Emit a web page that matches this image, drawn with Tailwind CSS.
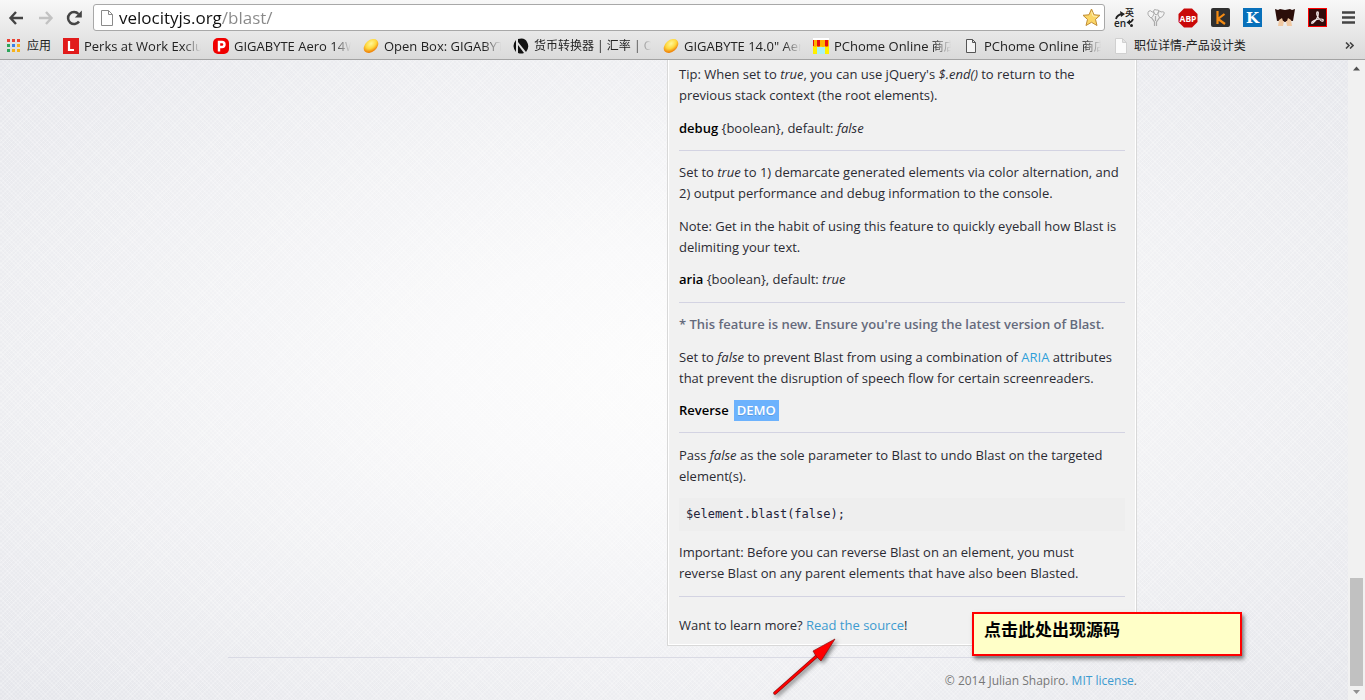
<!DOCTYPE html>
<html lang="en">
<head>
<meta charset="utf-8">
<title>Blast.js</title>
<script src="https://cdn.jsdelivr.net/npm/@tailwindcss/browser@4"></script>
</head>
<body class="relative h-screen flex flex-col overflow-hidden bg-[#f0f0f3] font-['Open_Sans','Noto_Sans_CJK_SC',sans-serif]">

<header class="shrink-0 h-[60px] flex flex-col bg-linear-to-b from-[#f8f8f8] to-[#dadada] border-b border-[#a3a3a3]">
  <div class="h-[35px] flex items-center pl-2 pr-[10px]">
    <button aria-label="Back" class="w-[18px] shrink-0"><svg width="16" height="16" viewBox="0 0 16 16" fill="none" stroke="#444" stroke-width="2.4"><path d="M8 2 2.5 8 8 14M2.5 8H15"/></svg></button>
    <button aria-label="Forward" class="w-[18px] ml-3 shrink-0"><svg width="16" height="16" viewBox="0 0 16 16" fill="none" stroke="#c2c2c2" stroke-width="2.4"><path d="M8 2 13.500 8 8 14M13.500 8H1"/></svg></button>
    <button aria-label="Reload" class="w-[18px] ml-[10px] shrink-0"><svg width="17" height="16" viewBox="0 0 17 16"><path d="M13 11.500A6 6 0 1 1 12.500 4" fill="none" stroke="#444" stroke-width="2.500"/><path d="M15.800.5V7.500H8.800z" fill="#444"/></svg></button>
    <div class="flex-1 ml-[9px] h-[27px] flex items-center bg-white border border-[#a8a8a8] rounded-[3px] pl-[7px] pr-[3px]">
      <svg class="shrink-0" width="12" height="16" viewBox="0 0 12 16" fill="#fff" stroke="#8a8a8a"><path d="M.5.5H7.500L11.500 4.500V15.500H.5zM7.500.5V4.500H11.500"/></svg>
      <input type="text" aria-label="Address" value="velocityjs.org/blast/" class="flex-1 min-w-0 ml-[6px] h-6 text-[17px] leading-6 outline-none text-transparent bg-clip-text bg-linear-to-r from-[#111] from-[103px] to-[#888] to-[103px]">
      <button aria-label="Bookmark this page"><svg width="19" height="19" viewBox="0 0 19 19"><path d="M9.500 1 12 6.800 18 7.300 13.500 11.400 15 17.500 9.500 14.300 4 17.500 5.500 11.400 1 7.300 7 6.800z" fill="#fbd667" stroke="#c08d35" stroke-linejoin="round"/><path d="M9.500 3.500 11 8 15 8.500" fill="none" stroke="#ffeeb0"/></svg></button>
    </div>
    <div class="flex items-center shrink-0 gap-[13px] ml-[9px]">
      <button aria-label="Translate"><svg width="20" height="20" viewBox="0 0 20 20"><g fill="#222" font-family="Open Sans,Noto Sans CJK SC,sans-serif"><text x="11" y="8" font-size="9" font-weight="500">英</text><text x="0" y="19" font-size="10" font-weight="600">en</text></g><path d="M2 11Q3 7 8 6M19 11Q18 14 15 14.500" fill="none" stroke="#222" stroke-width="1.800"/><path d="M6 3 11 6 7 9zM16 11.500V17L12.500 14.500z" fill="#222"/><circle cx="17.500" cy="17.500" r="1.500" fill="#222"/></svg></button>
      <button aria-label="Flowers"><svg width="18" height="20" viewBox="0 0 18 20" fill="#f4f4f4" stroke="#aaa"><path d="M7.500 18V14L4 9M9.500 18V14L13 9M8.500 13V8" fill="none" stroke-width="1.200"/><path d="M4 10Q-1 6 2 3Q4 2 5 4Q8 3 7 6Q6 9 4 10zM13 10Q10 7 11 4Q13 2 14 4Q18 3 17 6Q16 9 13 10zM9 7Q5 4 7 2Q8 1 9 2Q12 1 12 4Q11 6 9 7z"/></svg></button>
      <button aria-label="Adblock Plus"><svg width="20" height="20" viewBox="0 0 20 20"><path d="M6 .5H14L19.500 6V14L14 19.500H6L.5 14V6z" fill="#c90808"/><text x="10" y="13.500" text-anchor="middle" font-size="8.500" font-weight="700" fill="#fff" font-family="Open Sans,sans-serif">ABP</text></svg></button>
      <button aria-label="k extension"><svg width="19" height="19" viewBox="0 0 19 19"><rect width="19" height="19" rx="2" fill="#303030"/><path d="M6.500 3V16M13.500 6 7 11 14 16" fill="none" stroke="#f58b12" stroke-width="2.200"/></svg></button>
      <button aria-label="K extension"><svg width="19" height="19" viewBox="0 0 19 19"><path d="M0 0H19V19H0z" fill="#0870ba"/><text x="9.500" y="15" text-anchor="middle" font-size="15" font-weight="700" fill="#fff" font-family="DejaVu Serif,serif">K</text></svg></button>
      <button aria-label="Reader"><svg width="20" height="19" viewBox="0 0 20 19"><path d="M0 1 3 2 5 1 10 2 15 1 17 2 20 1 18 13Q14 12 10 14Q6 12 2 13z" fill="#2b0e0a"/><path d="M3 18 4 12 7 10 8 13 9 13 8 18zM17 18 16 12 13 10 12 13 11 13 12 18z" fill="#f0c8a2"/></svg></button>
      <button aria-label="Adobe Acrobat"><svg width="19" height="19" viewBox="0 0 19 19"><rect x=".5" y=".5" width="18" height="18" fill="#330c0c" stroke="#f00"/><path d="M9 4Q11 3 10 8Q9 12 5 15Q3 16 4 14Q7 11 13 11Q16 11 15 13Q13 14 10 9Q8 6 9 4z" fill="none" stroke="#f3e8e8" stroke-width="1.200"/></svg></button>
      <button aria-label="Menu" class="ml-[2px]"><svg width="13" height="13" viewBox="0 0 13 13" stroke="#444" stroke-width="2.600"><path d="M0 1.500H13M0 6.500H13M0 11.500H13"/></svg></button>
    </div>
  </div>
  <nav aria-label="Bookmarks" class="h-[21px] flex items-center pl-[7px] pr-[11px] text-[13px] leading-5 text-[#222] whitespace-nowrap">
    <a href="#" class="flex items-center w-[56px] shrink-0 text-xs"><svg class="mr-[7px]" width="13" height="13" viewBox="0 0 13 13"><path d="M0 0H3V3H0zM5 0H8V3H5zM10 0H13V3H10z" fill="#e84235"/><path d="M0 5H3V8H0z" fill="#2ca55a"/><path d="M5 5H8V8H5z" fill="#3a7fe8"/><path d="M10 5H13V8H10zM5 10H8V13H5zM10 10H13V13H10z" fill="#f7b21a"/><path d="M0 10H3V13H0z" fill="#2ca55a"/></svg>应用</a>
    <a href="#" class="flex items-center w-[150px] shrink-0 pr-3"><svg class="shrink-0 mr-[5px]" width="16" height="16" viewBox="0 0 16 16"><path d="M0 0H16V16H0z" fill="#e11b1b"/><path d="M6 3V12H11" fill="none" stroke="#fff" stroke-width="2.200"/></svg><span class="overflow-hidden mask-r-from-85%">Perks at Work Exclus</span></a>
    <a href="#" class="flex items-center w-[150px] shrink-0 pr-3"><svg class="shrink-0 mr-[5px]" width="16" height="16" viewBox="0 0 16 16"><rect width="16" height="16" rx="5" fill="#f00000"/><path d="M6 13.500V4H9Q11.500 4 11.500 6.500T9 9H6" fill="none" stroke="#fff" stroke-width="2.400"/></svg><span class="overflow-hidden mask-r-from-85%">GIGABYTE Aero 14W</span></a>
    <a href="#" class="flex items-center w-[150px] shrink-0 pr-3"><svg class="shrink-0 mr-[5px]" width="16" height="16" viewBox="0 0 16 16"><defs><radialGradient id="egg" cx=".6" cy=".35" r=".6"><stop offset="0" stop-color="#fff79a"/><stop offset=".6" stop-color="#ffd83c"/><stop offset="1" stop-color="#f08a10"/></radialGradient></defs><ellipse cx="8" cy="8" rx="8.300" ry="5.800" transform="rotate(-42 8 8)" fill="url(#egg)"/></svg><span class="overflow-hidden mask-r-from-85%">Open Box: GIGABYTE</span></a>
    <a href="#" class="flex items-center w-[150px] shrink-0 pr-3"><svg class="shrink-0 mr-[5px]" width="16" height="16" viewBox="0 0 16 16"><path d="M3 2V14Q-2 8 3 2zM5 1Q12-1 14 4Q17 9 13 14L5 4zM5 7 11 15Q8 16 5 15z" fill="#111"/></svg><span class="overflow-hidden text-xs mask-r-from-85%">货币转换器 | 汇率 | OA</span></a>
    <a href="#" class="flex items-center w-[150px] shrink-0 pr-3"><svg class="shrink-0 mr-[5px]" width="16" height="16" viewBox="0 0 16 16"><ellipse cx="8" cy="8" rx="8.300" ry="5.800" transform="rotate(-42 8 8)" fill="url(#egg)"/></svg><span class="overflow-hidden mask-r-from-85%">GIGABYTE 14.0" Aero</span></a>
    <a href="#" class="flex items-center w-[150px] shrink-0 pr-3"><svg class="shrink-0 mr-[5px]" width="16" height="16" viewBox="0 0 16 16"><path d="M0 0H16V16H0z" fill="#fff"/><path d="M0 8H16V16H0z" fill="#ffef00"/><path d="M4 9H12V16H4z" fill="#a8f0f5"/><path d="M0 2H16V8Q14 10 12 8 10 10 8 8 6 10 4 8 2 10 0 8z" fill="#ffb400"/><path d="M4 2H7V8Q5 9 4 8zM12 2H15V8Q13 9 12 8zM0 2H1V8H0z" fill="#e81010"/></svg><span class="overflow-hidden mask-r-from-85%">PChome Online <span class="text-xs">商店</span></span></a>
    <a href="#" class="flex items-center w-[150px] shrink-0 pr-3"><svg class="shrink-0 mr-[5px]" width="16" height="16" viewBox="0 0 16 16" fill="#f4f4f4" stroke="#555"><path d="M3.500 1.500H9.500L12.500 4.500V14.500H3.500zM9.500 1.500V4.500H12.500"/></svg><span class="overflow-hidden mask-r-from-85%">PChome Online <span class="text-xs">商店</span></span></a>
    <a href="#" class="flex items-center text-xs"><svg class="shrink-0 mr-[5px]" width="16" height="16" viewBox="0 0 16 16" fill="#fbfbfb" stroke="#d0d0d0"><path d="M2.500.5H9.500L13.500 4.500V15.500H2.500zM9.500.5V4.500H13.500"/></svg>职位详情-产品设计类</a>
    <button aria-label="More bookmarks" class="ml-auto"><svg width="9" height="7" viewBox="0 0 9 7" fill="none" stroke="#444" stroke-width="1.600"><path d="M1 .5 4 3.500 1 6.500M5 .5 8 3.500 5 6.500"/></svg></button>
  </nav>
</header>

<div class="flex-1 min-h-0 flex">
  <div class="flex-1 min-w-0 bg-[repeating-linear-gradient(45deg,#ffffff38_0_1px,transparent_1px_3px),repeating-linear-gradient(135deg,#ffffff38_0_1px,transparent_1px_3px),radial-gradient(ellipse_at_50%_48%,#fcfcfc_0%,#f9f9fa_25%,#e5e6eb_100%)]">
    <div class="max-w-[926px] mx-auto text-[13px] leading-[21px] text-[#2b2b33]">
      <main class="w-[470px] ml-auto px-[11px] pt-1 pb-[9px] bg-[#f1f1f1] border border-t-0 border-[#d8d8d8] shadow-[inset_1px_-1px_0_#fff,inset_-1px_0_0_#fff]">
        <p>Tip: When set to <em>true</em>, you can use jQuery's <em>$.end()</em> to return to the<br>previous stack context (the root elements).</p>
        <h3 class="mt-3 pb-[11px] border-b border-[#d3d3e2]"><strong class="font-semibold text-black">debug</strong> {boolean}, default: <em>false</em></h3>
        <p class="mt-[11px]">Set to <em>true</em> to 1) demarcate generated elements via color alternation, and 2) output performance and debug information to the console.</p>
        <p class="mt-3">Note: Get in the habit of using this feature to quickly eyeball how Blast is<br>delimiting your text.</p>
        <h3 class="mt-[11px] pb-3 border-b border-[#d3d3e2]"><strong class="font-semibold text-black">aria</strong> {boolean}, default: <em>true</em></h3>
        <p class="mt-[11px] font-semibold text-[#656a7c]">* This feature is new. Ensure you're using the latest version of Blast.</p>
        <p class="mt-3">Set to <em>false</em> to prevent Blast from using a combination of <a href="#" class="text-[#2f9fd9]">ARIA</a> attributes<br>that prevent the disruption of speech flow for certain screenreaders.</p>
        <h3 class="mt-[11px] pb-[11px] flex items-center gap-[5px] border-b border-[#d3d3e2]"><strong class="font-semibold text-black">Reverse</strong><button class="h-[21px] px-[3px] bg-[#6cb2fd] text-white font-semibold text-shadow-2xs">DEMO</button></h3>
        <p class="mt-3">Pass <em>false</em> as the sole parameter to Blast to undo Blast on the targeted<br>element(s).</p>
        <pre class="mt-[11px] px-[7px] py-[6px] bg-[#eee] font-['DejaVu_Sans_Mono',monospace] text-xs leading-[21px] text-[#22223a]">$element.blast(false);</pre>
        <p class="mt-[11px] pb-3 border-b border-[#d3d3e2]">Important: Before you can reverse Blast on an element, you must<br>reverse Blast on any parent elements that have also been Blasted.</p>
        <p class="mt-[18px]">Want to learn more? <a href="#" class="text-[#3d9bd0]">Read the source</a>!</p>
      </main>
      <footer class="mt-[11px] ml-[17px] pt-3 border-t border-[#d9dae4] text-right text-xs leading-[21px] text-[#777]">© 2014 Julian Shapiro. <a href="#" class="text-[#3d9bd0]">MIT license</a>.</footer>
    </div>
  </div>
  <div class="w-[17px] shrink-0 flex flex-col items-center bg-[#f1f1f1]" aria-hidden="true">
    <svg class="mt-[6px]" width="7" height="5" viewBox="0 0 7 5"><path d="M0 4.500 3.500.5 7 4.500z" fill="#505050"/></svg>
    <div class="mt-auto w-[13px] h-[108px] bg-[#c1c1c1]"></div>
    <svg class="mt-1 mb-[6px]" width="7" height="4" viewBox="0 0 7 4"><path d="M0 0H7L3.500 4z" fill="#909090"/></svg>
  </div>
</div>

<!-- Annotations laid over the page -->
<svg class="absolute left-[768px] top-[632px] drop-shadow-[2px_2px_2px_#00000080]" width="76" height="68" viewBox="0 0 76 68" aria-hidden="true"><path d="M7 61 50 23" stroke="#8a1010" stroke-width="3.400" stroke-linecap="round"/><path d="M7 61 50 23" stroke="#f00" stroke-width="2.200" stroke-linecap="round"/><path d="M67 7 45 19 48 24 53 29z" fill="#f00" stroke="#8a1010" stroke-width=".7"/></svg>
<div class="absolute left-[972px] top-[612px] w-[270px] h-11 pl-[10px] pt-1 bg-[#ffffc8] border-2 border-[#f00] shadow-[2px_3px_4px_#00000080] text-[17px] leading-6 font-bold text-black">点击此处出现源码</div>
</body>
</html>
